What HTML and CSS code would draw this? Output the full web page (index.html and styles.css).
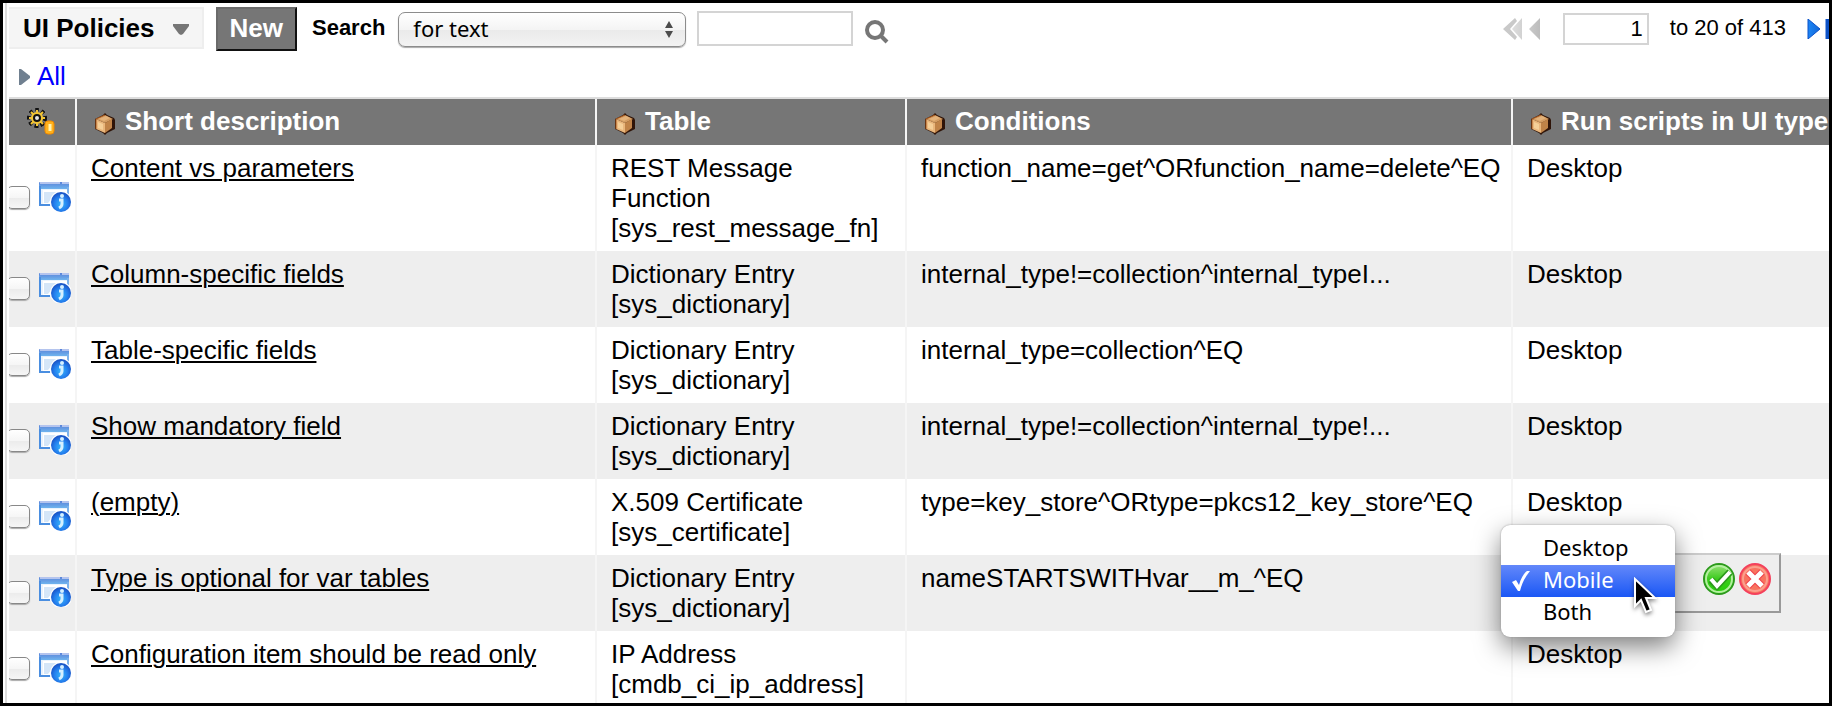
FILE: index.html
```html
<!DOCTYPE html>
<html lang="en">
<head>
<meta charset="utf-8">
<title>UI Policies</title>
<link rel="stylesheet" href="styles.css">
</head>
<body>
<svg class="defs" aria-hidden="true">
  <defs>
    <linearGradient id="bar" x1="0" y1="0" x2="0" y2="1"><stop offset="0" stop-color="#5a82d8"/><stop offset="1" stop-color="#6fb4ee"/></linearGradient>
    <radialGradient id="blue" cx=".5" cy=".6" r=".55"><stop offset="0" stop-color="#35b4fb"/><stop offset=".6" stop-color="#2480ee"/><stop offset="1" stop-color="#1a56c8"/></radialGradient>
    <linearGradient id="next" x1="0" y1="0" x2="1" y2="0"><stop offset="0" stop-color="#1c86f5"/><stop offset="1" stop-color="#0a4dc0"/></linearGradient>
    <linearGradient id="prev" x1="0" y1="0" x2="1" y2="0"><stop offset="0" stop-color="#dedede"/><stop offset="1" stop-color="#bcbcbc"/></linearGradient>
    <linearGradient id="green" x1="0" y1="0" x2="0" y2="1"><stop offset="0" stop-color="#9be37a"/><stop offset=".5" stop-color="#3ccb1e"/><stop offset="1" stop-color="#22cf05"/></linearGradient>
    <symbol id="record" viewBox="0 0 32 30">
      <rect x="1" y="1" width="29" height="23" fill="#eaf3fd"/>
      <path d="M4 8h24v14H4z" fill="#fff"/>
      <path d="M5 10h13l-9 11H5z" fill="#d5e6f8"/>
      <rect x="0" y="0" width="30" height="7" rx="1" fill="url(#bar)"/>
      <path d="M1 1h29" stroke="#b4c4ee" stroke-width="2" stroke-dasharray="20 2"/>
      <path d="M1 4v19h10" fill="none" stroke="#4a8ee0" stroke-width="2"/>
      <path d="M29 5v8" stroke="#7db2ec" stroke-width="2"/>
      <circle cx="22" cy="20" r="11" fill="#fff"/>
      <circle cx="22" cy="20" r="10" fill="url(#blue)"/>
      <path d="M20 18h3v4c0 2-1 3-3 4" fill="none" stroke="#d5f0ff" stroke-width="3"/>
      <circle cx="23" cy="14" r="2" fill="#d5f0ff"/>
    </symbol>
    <symbol id="box" viewBox="0 0 22 22">
      <path d="M11 0l2 2 7 3 1 2v9l-8 4-2 2-2-2-8-4V6l8-4z" fill="#2f1408"/>
      <path d="M2 6l9-4 8 4-8 4z" fill="#d39c62"/>
      <path d="M2 6l9 4v10l-9-4z" fill="#e9b67c"/>
      <path d="M11 10l7-4v9l-7 5z" fill="#c08348"/>
      <path d="M2 16V6l9-4" fill="none" stroke="#a5571f" stroke-width="1"/>
      <path d="M5 6l7-3 4 2-6 3z" fill="#e3b27a"/>
      <path d="M4 9l5 2v6l-5-2z" fill="#f5cf98"/>
    </symbol>
  </defs>
</svg>
<div class="frame">
  <div class="list">
    <header class="toolbar">
      <button class="title" type="button">UI Policies
        <svg class="caret" viewBox="0 0 16 11"><path d="M0 0h16v2l-6 8-2 1-2-1-6-8z" fill="#767676"/></svg>
      </button>
      <button class="new" type="button">New</button>
      <label class="search-label" for="field">Search</label>
      <span class="select-wrap">
        <select class="select" id="field"><option>for text</option></select>
        <svg class="arrows" viewBox="0 0 8 17"><path d="M4 0l4 7H0zM0 10h8l-4 7z" fill="#4c4c4c"/></svg>
      </span>
      <input class="query" type="text" aria-label="Search text">
      <button class="plain" type="button" aria-label="Run search">
        <svg class="glass" viewBox="0 0 24 24"><circle cx="10" cy="10" r="8" fill="none" stroke="#767676" stroke-width="4"/><path d="M15 15l7 7" stroke="#767676" stroke-width="4"/></svg>
      </button>
      <nav class="pager" aria-label="Pages">
        <button class="plain back" type="button" aria-label="Previous pages">
          <svg class="back-icon" viewBox="0 0 38 22"><path d="M12 0L0 11l12 11 2-3-7-8 7-8z" fill="#c9c9c9"/><path d="M19 0v22L9 11zM37 0v22L26 11z" fill="url(#prev)"/></svg>
        </button>
        <input class="page" type="text" value="1" aria-label="Page start">
        <span class="range">to 20 of 413</span>
        <button class="plain" type="button" aria-label="Next pages">
          <svg class="next-icon" viewBox="0 0 22 20"><path d="M1 0l12 10L1 20zM19 0h3v20h-3z" fill="url(#next)" stroke="#0a50c8"/></svg>
        </button>
      </nav>
    </header>
    <div class="crumbs">
      <svg class="crumb-arrow" viewBox="0 0 11 16"><path d="M0 0h2l9 7v2l-9 7H0z" fill="#708090"/></svg>
      <a href="#">All</a>
    </div>
    <table class="grid">
      <colgroup><col class="c-tools"><col class="c-desc"><col class="c-table"><col class="c-cond"><col></colgroup>
      <thead>
        <tr>
          <th aria-label="Personalize">
            <svg class="gear" viewBox="0 0 30 28"><path d="M11 1v20M1 11h20M4 4l14 14M18 4L4 18" stroke="#111" stroke-width="3" stroke-dasharray="3 14"/><circle cx="11" cy="11" r="8" fill="none" stroke="#111" stroke-width="4" stroke-dasharray="3 3"/><circle cx="11" cy="11" r="6" fill="#f3c535"/><path d="M11 3v16M3 11h16M5 5l12 12M17 5L5 17" stroke="#f3c535" stroke-width="2"/><circle cx="11" cy="11" r="3" fill="#e8e8e8" stroke="#111" stroke-width="2"/><rect x="19" y="14" width="9" height="13" rx="3" fill="#ffb11c" stroke="#f08a00"/><path d="M24 17v7" stroke="#fff3b0" stroke-width="3"/></svg>
          </th>
          <th><svg class="box"><use href="#box"/></svg>Short description</th>
          <th><svg class="box"><use href="#box"/></svg>Table</th>
          <th><svg class="box"><use href="#box"/></svg>Conditions</th>
          <th><svg class="box"><use href="#box"/></svg>Run scripts in UI type</th>
        </tr>
      </thead>
      <tbody>
        <tr>
          <td class="tools"><div class="tool-row"><input class="check" type="checkbox" aria-label="Select Content vs parameters"><svg class="record"><use href="#record"/></svg></div></td>
          <td><a href="#">Content vs parameters</a></td><td>REST Message Function [sys_rest_message_fn]</td><td>function_name=get^ORfunction_name=delete^EQ</td><td>Desktop</td>
        </tr>
        <tr>
          <td class="tools"><div class="tool-row"><input class="check" type="checkbox" aria-label="Select Column-specific fields"><svg class="record"><use href="#record"/></svg></div></td>
          <td><a href="#">Column-specific fields</a></td><td>Dictionary Entry [sys_dictionary]</td><td>internal_type!=collection^internal_typeI...</td><td>Desktop</td>
        </tr>
        <tr>
          <td class="tools"><div class="tool-row"><input class="check" type="checkbox" aria-label="Select Table-specific fields"><svg class="record"><use href="#record"/></svg></div></td>
          <td><a href="#">Table-specific fields</a></td><td>Dictionary Entry [sys_dictionary]</td><td>internal_type=collection^EQ</td><td>Desktop</td>
        </tr>
        <tr>
          <td class="tools"><div class="tool-row"><input class="check" type="checkbox" aria-label="Select Show mandatory field"><svg class="record"><use href="#record"/></svg></div></td>
          <td><a href="#">Show mandatory field</a></td><td>Dictionary Entry [sys_dictionary]</td><td>internal_type!=collection^internal_type!...</td><td>Desktop</td>
        </tr>
        <tr>
          <td class="tools"><div class="tool-row"><input class="check" type="checkbox" aria-label="Select (empty)"><svg class="record"><use href="#record"/></svg></div></td>
          <td><a href="#">(empty)</a></td><td>X.509 Certificate [sys_certificate]</td><td>type=key_store^ORtype=pkcs12_key_store^EQ</td><td>Desktop</td>
        </tr>
        <tr>
          <td class="tools"><div class="tool-row"><input class="check" type="checkbox" aria-label="Select Type is optional for var tables"><svg class="record"><use href="#record"/></svg></div></td>
          <td><a href="#">Type is optional for var tables</a></td><td>Dictionary Entry [sys_dictionary]</td><td>nameSTARTSWITHvar__m_^EQ</td>
          <td class="editing">
            <div class="editor">
              <button class="plain" type="button" aria-label="Save">
                <svg class="round" viewBox="0 0 32 32"><circle cx="16" cy="16" r="15" fill="url(#green)" stroke="#2c9a1c" stroke-width="2"/><circle cx="16" cy="16" r="13" fill="none" stroke="#b4efa0" stroke-width="2"/><path d="M8 17l6 6L27 9" fill="none" stroke="#2c9a1c" stroke-width="7"/><path d="M8 16l6 7L27 9" fill="none" stroke="#fff" stroke-width="4"/></svg>
              </button>
              <button class="plain" type="button" aria-label="Cancel">
                <svg class="round" viewBox="0 0 32 32"><circle cx="16" cy="16" r="15" fill="#f8735f" stroke="#f4405c" stroke-width="2"/><circle cx="16" cy="16" r="12" fill="none" stroke="#fba08e" stroke-width="2"/><path d="M9 9l14 14M23 9L9 23" stroke="#f0404a" stroke-width="7"/><path d="M9 9l14 14M23 9L9 23" stroke="#fff" stroke-width="5"/></svg>
              </button>
            </div>
            <ul class="menu" role="listbox" aria-label="Run scripts in UI type">
              <li role="option">Desktop</li>
              <li role="option" class="active" aria-selected="true"><svg class="tick" viewBox="0 0 18 20"><path d="M0 11l4-2 3 5C9 7 12 2 15 0h3C13 6 10 12 8 20H6z" fill="#fff"/></svg>Mobile</li>
              <li role="option">Both</li>
            </ul>
            <svg class="pointer" viewBox="0 0 24 38"><path d="M2 2v27l6-6 5 12 5-2-5-12h9z" fill="#000" stroke="#fff" stroke-width="2"/></svg>
          </td>
        </tr>
        <tr>
          <td class="tools"><div class="tool-row"><input class="check" type="checkbox" aria-label="Select Configuration item should be read only"><svg class="record"><use href="#record"/></svg></div></td>
          <td><a href="#">Configuration item should be read only</a></td><td>IP Address [cmdb_ci_ip_address]</td><td></td><td>Desktop</td>
        </tr>
      </tbody>
    </table>
  </div>
</div>
</body>
</html>
```

FILE: styles.css
```css
* { box-sizing: border-box; }
body {
  margin: 0;
  font-family: "Liberation Sans", Arial, sans-serif;
  font-size: 26px;
  line-height: 30px;
  color: #000;
  background: #fff;
}
button, input, select { font: inherit; color: inherit; margin: 0; }
svg { display: block; flex: none; }
.defs { position: absolute; width: 0; height: 0; }
.frame {
  height: 100vh;
  border: 3px solid #000;
  padding-left: 2px;
  overflow: hidden;
}
.list { border-left: 2px solid #ddd; padding-left: 2px; }
.toolbar { display: flex; align-items: flex-start; height: 54px; padding-top: 4px; white-space: nowrap; }
.title {
  display: flex;
  align-items: center;
  gap: 18px;
  height: 42px;
  padding: 0 13px 0 14px;
  border: 2px solid #eee;
  border-left: 0;
  background: #f5f5f5;
  font-weight: bold;
}
.caret { width: 16px; height: 11px; margin-top: 2px; }
.new {
  height: 44px;
  margin-left: 12px;
  padding: 0 12px 3px;
  border: 2px solid;
  border-color: #6a6a6a #111 #111 #6a6a6a;
  background: #767676;
  color: #fff;
  font-weight: bold;
}
.search-label { margin: 6px 13px 0 15px; font-size: 22px; font-weight: bold; }
.select-wrap { position: relative; width: 288px; margin-top: 5px; }
.select {
  appearance: none;
  width: 100%;
  height: 35px;
  padding: 0 14px 4px;
  border: 1px solid #8c8c8c;
  border-radius: 7px;
  background: linear-gradient(#fff, #f4f4f4 50%, #eaeaea 51%, #f3f3f3);
  box-shadow: 0 1px 1px #aaa;
  font-family: "Noto Sans", sans-serif;
  font-size: 22px;
}
.arrows { position: absolute; right: 13px; top: 9px; width: 8px; height: 17px; }
.query { width: 156px; height: 35px; margin: 4px 12px 0 11px; border: 2px solid #d4d4d4; background: #fff; }
.plain { padding: 0; border: 0; background: none; }
.glass { width: 24px; height: 24px; margin-top: 13px; }
.pager { display: flex; align-items: flex-start; margin-left: auto; font-size: 22px; }
.back-icon { width: 38px; height: 22px; margin-top: 11px; }
.page { width: 86px; height: 32px; margin: 6px 21px 0 22px; padding: 0 4px; border: 2px solid #d4d4d4; text-align: right; }
.range { margin: 6px 21px 0 0; }
.next-icon { width: 22px; height: 20px; margin-top: 12px; }
.crumbs { display: flex; align-items: center; gap: 7px; height: 40px; padding: 0 0 2px 10px; }
.crumb-arrow { width: 11px; height: 16px; margin-top: 2px; }
.crumbs a { color: #00f; text-decoration: none; }
.grid { width: 100%; table-layout: fixed; border-collapse: separate; border-spacing: 0; border-top: 2px solid #ddd; }
.c-tools { width: 68px; }
.c-desc { width: 520px; }
.c-table { width: 310px; }
.c-cond { width: 606px; }
th {
  padding: 7px 0 9px 17px;
  background: #767676;
  border-right: 2px solid #f5f5f5;
  color: #fff;
  text-align: left;
  white-space: nowrap;
}
th:last-child, td:last-child { border-right: 0; }
.box { display: inline-block; width: 22px; height: 22px; margin-right: 9px; vertical-align: -5px; }
.gear { width: 30px; height: 28px; }
td { padding: 8px 14px; border-right: 2px solid #f5f5f5; vertical-align: top; }
tbody tr:nth-child(even) { background: #eee; }
td a { color: #000; text-decoration: underline; text-decoration-thickness: 2px; text-underline-offset: 2px; }
.tools { padding: 0 0 2px; vertical-align: middle; overflow: hidden; }
.tool-row { display: flex; align-items: center; gap: 9px; }
.check {
  appearance: none;
  width: 23px;
  height: 23px;
  margin-left: -2px;
  border: 1px solid #888;
  border-radius: 5px;
  background: linear-gradient(#fff, #f6f6f6 50%, #ebebeb 51%, #f6f6f6);
  box-shadow: 0 1px 1px #aaa;
}
.record { width: 32px; height: 30px; }
.editing { position: relative; padding: 0; }
.editor {
  position: absolute;
  top: -2px;
  left: 0;
  display: flex;
  align-items: flex-start;
  gap: 4px;
  width: 268px;
  height: 60px;
  padding: 8px;
  justify-content: flex-end;
  border: 2px solid;
  border-color: #ccc #999 #999 #ccc;
  background: #eee;
}
.round { width: 32px; height: 32px; }
.menu {
  position: absolute;
  left: -12px;
  top: -30px;
  width: 174px;
  margin: 0;
  padding: 8px 0;
  border-radius: 9px;
  background: #fff;
  box-shadow: 0 0 2px #999, 0 10px 26px rgba(0, 0, 0, .5);
  font-family: "Noto Sans", sans-serif;
  font-size: 22px;
  line-height: 28px;
  list-style: none;
}
.menu li { position: relative; padding: 0 0 4px 42px; }
.menu .active { background: linear-gradient(#6388fa, #1a57f5); color: #fff; }
.tick { position: absolute; left: 11px; top: 6px; width: 18px; height: 20px; }
.pointer { position: absolute; left: 120px; top: 22px; width: 24px; height: 38px; filter: drop-shadow(0 2px 2px rgba(0, 0, 0, .5)); }
```
